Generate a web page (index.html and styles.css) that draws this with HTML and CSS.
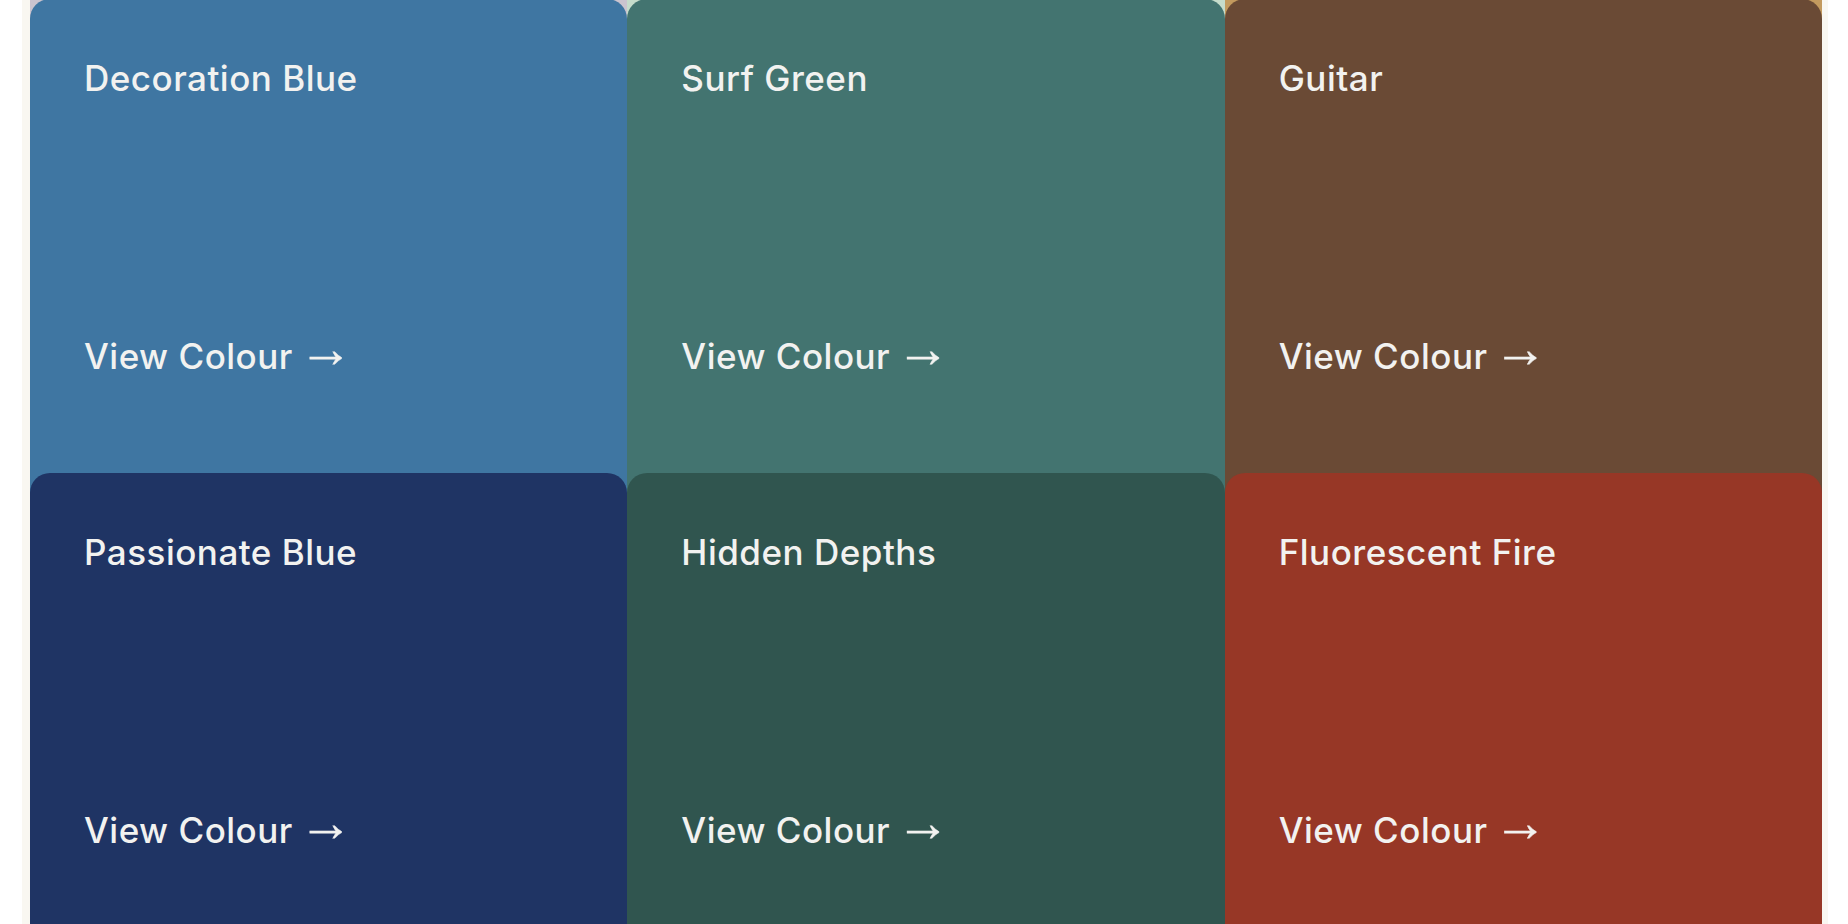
FILE: index.html
```html
<!DOCTYPE html>
<html lang="en">
<head>
<meta charset="utf-8">
<title>Colours</title>
<link rel="stylesheet" href="styles.css">
</head>
<body>
<main class="frame">
  <div class="grid">
    <div class="card c-lavender" aria-hidden="true"></div>
    <div class="card c-mint" aria-hidden="true"></div>
    <div class="card c-tan" aria-hidden="true"></div>

    <a class="card c-decoration" href="#"><span class="name">Decoration Blue</span><span class="link">View Colour <span class="arrow">→</span></span></a>
    <a class="card c-surf" href="#"><span class="name">Surf Green</span><span class="link">View Colour <span class="arrow">→</span></span></a>
    <a class="card c-guitar" href="#"><span class="name">Guitar</span><span class="link">View Colour <span class="arrow">→</span></span></a>

    <a class="card c-passionate" href="#"><span class="name">Passionate Blue</span><span class="link">View Colour <span class="arrow">→</span></span></a>
    <a class="card c-hidden" href="#"><span class="name">Hidden Depths</span><span class="link">View Colour <span class="arrow">→</span></span></a>
    <a class="card c-fire" href="#"><span class="name">Fluorescent Fire</span><span class="link">View Colour <span class="arrow">→</span></span></a>
  </div>
</main>
</body>
</html>
```
FILE: styles.css
```css
html, body {
  margin: 0;
  padding: 0;
  background: #ffffff;
  height: 100%;
  overflow: hidden;
}

.frame {
  margin: 0 20px 0 22px;
  padding: 0 6px 0 8px;
  background: #f9f7f1;
  min-height: 100%;
}

.grid {
  display: grid;
  grid-template-columns: repeat(3, 1fr);
  grid-auto-rows: 474px;
  margin-top: -475px;
}

.card {
  display: flex;
  flex-direction: column;
  align-items: flex-start;
  height: 600px;
  padding: 58px 40px 0 54px;
  border-radius: 20px;
  text-decoration: none;
  color: #f2f2f0;
  font-family: Inter, "Liberation Sans", sans-serif;
  font-weight: 500;
  font-size: 35px;
  line-height: 42px;
  letter-spacing: 0.5px;
  box-sizing: border-box;
}

.name {
  display: block;
}

.link {
  display: block;
  margin-top: 236px;
  white-space: nowrap;
}

.arrow {
  display: inline-block;
  font-family: "Liberation Sans", sans-serif;
  font-weight: 400;
  font-size: 54px;
  line-height: 0;
  letter-spacing: 0;
  vertical-align: 2px;
  margin-left: -4px;
  -webkit-text-stroke: 0.3px currentColor;
}

.c-lavender { background: #cbc4cf; }
.c-mint { background: #c6dccb; }
.c-tan { background: #c39a5e; }

.c-decoration { background: #3f76a2; }
.c-surf { background: #437470; }
.c-guitar { background: #6a4a35; }

.c-passionate { background: #1f3464; }
.c-hidden { background: #30554f; }
.c-fire { background: #973726; }
```
